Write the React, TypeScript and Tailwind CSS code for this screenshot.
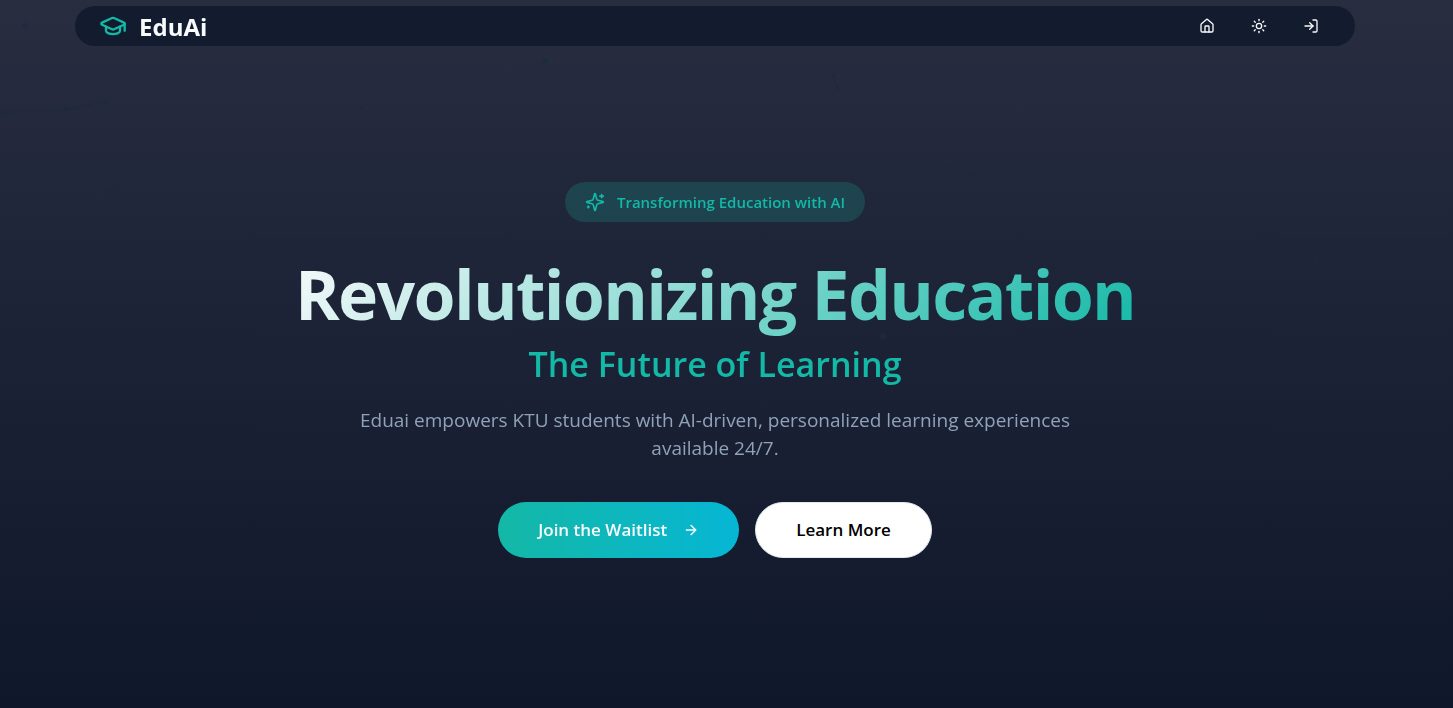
import { ArrowRight, GraduationCap, House, LogIn, Sun } from "lucide-react";

const particles = [
  { x: 25, y: 26, r: 3 },
  { x: 66, y: 110, r: 3 },
  { x: 106, y: 101, r: 3 },
  { x: 0, y: 113, r: 3 },
  { x: 102, y: 194, r: 2 },
  { x: 160, y: 167, r: 2 },
  { x: 361, y: 107, r: 2 },
  { x: 545, y: 61, r: 3 },
  { x: 833, y: 75, r: 2 },
  { x: 838, y: 89, r: 2 },
  { x: 883, y: 336, r: 3 },
  { x: 935, y: 162, r: 2 },
  { x: 1239, y: 223, r: 2 },
  { x: 1315, y: 259, r: 2 },
];

function Particles() {
  return (
    <svg className="pointer-events-none absolute inset-0 h-full w-full" aria-hidden="true">
      <g fill="#1c2c3d" opacity="0.8">
        {particles.map((p) => (
          <circle key={`${p.x}-${p.y}`} cx={p.x} cy={p.y} r={p.r} />
        ))}
      </g>
      <g stroke="#1c2c3d" fill="none" opacity="0.7">
        <path d="M0 113L66 110L106 101" />
        <path d="M833 75L838 89" />
        <path d="M102 194L160 167M935 162L975 176M1239 223L1315 259" opacity="0.4" />
      </g>
    </svg>
  );
}

function SparklesIcon() {
  return (
    <svg
      viewBox="0 0 24 24"
      className="size-5"
      fill="none"
      stroke="currentColor"
      strokeWidth="2"
      strokeLinecap="round"
      strokeLinejoin="round"
      aria-hidden="true"
    >
      <path d="M9.937 15.5A2 2 0 0 0 8.5 14.063l-6.135-1.582a.5.5 0 0 1 0-.962L8.5 9.936A2 2 0 0 0 9.937 8.5l1.582-6.135a.5.5 0 0 1 .963 0L14.063 8.5A2 2 0 0 0 15.5 9.937l6.135 1.581a.5.5 0 0 1 0 .964L15.5 14.063a2 2 0 0 0-1.437 1.437l-1.582 6.135a.5.5 0 0 1-.963 0z" />
      <path d="M20 3v4M22 5h-4M4 17v2M5 18H3" />
    </svg>
  );
}

function Header() {
  return (
    <header className="mx-auto flex h-10 w-full max-w-7xl items-center justify-between rounded-full bg-[#131c2e] px-6">
      <a href="#" className="flex items-center gap-3">
        <GraduationCap className="size-7 text-[#14b8a6]" />
        <span className="pt-px text-2xl leading-8 font-bold text-slate-50">EduAi</span>
      </a>
      <nav className="flex items-center gap-3 text-slate-50">
        <a href="#" aria-label="Home" className="flex h-9 w-10 items-center justify-center">
          <House className="size-4" />
        </a>
        <button type="button" aria-label="Toggle theme" className="flex h-9 w-10 items-center justify-center">
          <Sun className="size-4" />
        </button>
        <a href="#" aria-label="Log in" className="flex h-9 w-10 items-center justify-center">
          <LogIn className="size-4" />
        </a>
      </nav>
    </header>
  );
}

export default function App() {
  return (
    <div className="relative min-h-screen bg-linear-to-b/srgb from-[#282d40] to-[#0f172a] pt-[6px] pr-[23px] font-['Open_Sans','Noto_Sans',sans-serif]">
      <Particles />
      <div className="relative">
        <Header />
        <main className="mx-auto flex max-w-5xl flex-col items-center pt-34 text-center">
          <div className="flex h-10 items-center gap-3 rounded-full bg-[#14b8a6]/20 px-5 text-[#14b8a6]">
            <SparklesIcon />
            <span className="text-[15px] leading-6 font-semibold">Transforming Education with AI</span>
          </div>
          <h1 className="mt-6 flex flex-col items-center">
            <span className="bg-linear-135/srgb from-slate-50 to-[#14b8a6] bg-clip-text text-[68px] leading-24 font-bold tracking-tight text-transparent">
              Revolutionizing Education
            </span>
            <span className="text-[34px] leading-11 font-semibold text-[#14b8a6]">The Future of Learning</span>
          </h1>
          <p className="mt-5 max-w-3xl text-[19px] leading-7 text-slate-400">
            Eduai empowers KTU students with AI-driven, personalized learning experiences available 24/7.
          </p>
          <div className="mt-10 flex gap-4 text-[17px] font-semibold">
            <button
              type="button"
              className="flex h-14 items-center gap-4 rounded-full bg-linear-to-r/srgb from-[#14b8a6] to-[#06b6d4] px-10 text-slate-50"
            >
              Join the Waitlist
              <ArrowRight className="size-4" />
            </button>
            <button type="button" className="h-14 rounded-full border border-slate-200 bg-white px-10 text-black">
              Learn More
            </button>
          </div>
        </main>
      </div>
    </div>
  );
}
